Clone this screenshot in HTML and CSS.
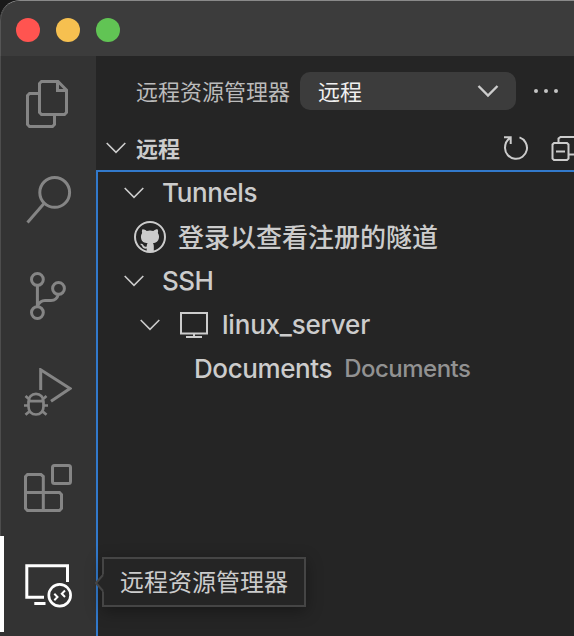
FILE: index.html
```html
<!DOCTYPE html>
<html lang="zh-CN">
<head>
<meta charset="utf-8">
<title>远程资源管理器</title>
<link rel="stylesheet" href="styles.css">
</head>
<body>
<div class="window">
  <header class="titlebar">
    <span class="light red"></span><span class="light yellow"></span><span class="light green"></span>
  </header>
  <div class="main">
    <nav class="activity">
      <div class="item"><svg viewBox="0 0 48 48"><path d="M14 13.5H5.5l-2 2v29l2 2h23l2-2V36M17.500 1.500H34L42.500 10V32.500l-2 2h-23l-2-2v-29zM33.500 1.500V10.500H42.500"/></svg></div>
      <div class="item"><svg viewBox="0 0 48 48"><circle cx="30.700" cy="16.400" r="14.900"/><path d="M20 27.500L3.500 46.500"/></svg></div>
      <div class="item"><svg viewBox="0 0 48 48"><circle cx="13.400" cy="7.400" r="5.900"/><circle cx="34.500" cy="16.400" r="5.900"/><circle cx="13.400" cy="40.600" r="5.900"/><path d="M13.400 13.500V34.500C15 30.500 17 28.500 21 28.500H27C31 28.500 33.500 26 34.500 22"/></svg></div>
      <div class="item"><svg viewBox="0 0 48 48"><path d="M16.700 22V1.800L46 20.500L27 33.300"/><path d="M12 25.800c-4.500 0-7.500 3.500-7.500 8v4.700c0 5 3 8 7.500 8s7.500-3 7.500-8v-4.700c0-4.500-3-8-7.500-8zM5 33.200H19M0 37.500H4.500M19.500 37.500H24M1.500 28L6 32M22.500 28L18 32M1.500 46.800L6.500 42.500M22.500 46.800L17.500 42.500" stroke-width="2.700"/></svg></div>
      <div class="item"><svg viewBox="0 0 48 48"><path d="M3.500 10.500H17l2.300 2V28.500H35.500l2 2V44.500l-2 2H3.500l-2-2V12.500zM1.500 28.500H19.300V46.500"/><rect x="28.500" y="1.500" width="18" height="18" rx="2"/></svg></div>
      <div class="item active"><svg viewBox="0 0 48 48"><path d="M20 37.300H2.800V5.800H43.500V22M10.300 43.500H21.500"/><circle cx="35.700" cy="35.300" r="10.900" stroke-width="2.700"/><path d="M30.300 33.700L33.500 37L30.300 40.300M41 30.500L37.800 33.700L41 37" stroke-width="2"/></svg></div>
    </nav>
    <main class="side">
      <div class="heading">
        <span class="name">远程资源管理器</span>
        <div class="select"><span>远程</span><svg width="22" height="14" viewBox="0 0 22 14"><path d="M1.500 2L11 11.500L20.500 2"/></svg></div>
        <div class="dots"><i></i><i></i><i></i></div>
      </div>
      <div class="section">
        <svg class="chev" viewBox="0 0 20 12"><path d="M.7 1L10 10.300L19.300 1"/></svg>
        <span class="title">远程</span>
        <svg class="refresh" viewBox="0 0 26 26"><path d="M1 2.300H7.700V9M7.200 2.800C3.800 5 2 8.500 2 13A11 11 0 1 0 16.500 2.400"/></svg>
        <svg class="collapse" viewBox="0 0 28 26"><path d="M7.500 8V3.500l2-1.500H28M18 19.500H28M3 8H16l1.500 1.500V23.500L16 25H3l-1.500-1.500V9.500zM5 16.500H14"/></svg>
      </div>
      <div class="tree">
        <div class="row group"><svg class="chev" viewBox="0 0 20 12"><path d="M.7 1L10 10.300L19.300 1"/></svg><span class="tunnels">Tunnels</span></div>
        <div class="row login"><svg class="github" viewBox="0 0 32 32"><circle cx="16" cy="16" r="15"/><path class="cat" d="M8.300 8.400C9.500 8 11.500 9 12.700 9.900C15 9.200 17 9.200 19.300 9.900C21 8.800 22.500 8.100 23.700 8.400C24.200 9.900 24.200 11 23.800 12.100C25 13.700 25.200 15.500 24.900 17.300C24.300 20.600 22.200 21.700 18.900 22.300C19.600 23.200 19.800 24 19.800 25V31H12.700V27.500C9 28.300 8.500 25.800 7.500 24.300L6.100 23.100C8.200 22.300 9 23.600 9.800 24.700C10.700 25.900 11.700 25.900 12.700 25.500C12.800 24 13 23 13.700 22.300C10.200 21.900 7.600 20.700 7.100 17.300C6.800 15.500 7 13.700 8.200 12.100C7.800 11 7.800 9.900 8.300 8.400Z"/></svg><span class="cjk">登录以查看注册的隧道</span></div>
        <div class="row group"><svg class="chev" viewBox="0 0 20 12"><path d="M.7 1L10 10.300L19.300 1"/></svg><span class="ssh">SSH</span></div>
        <div class="row host"><svg class="chev" viewBox="0 0 20 12"><path d="M.7 1L10 10.300L19.300 1"/></svg><svg class="monitor" viewBox="0 0 28 26"><path d="M1 1H27V21.500H1zM14 21.500V25M6 25H22"/></svg><span class="server">linux_server</span></div>
        <div class="row folder"><span class="doc">Documents</span><span class="path">Documents</span></div>
      </div>
    </main>
  </div>
  <div class="tooltip">远程资源管理器<svg viewBox="0 0 9 18"><path class="fill" d="M9 0V18L1 9z"/><path d="M8 1L1 9L8 17"/></svg></div>
</div>
</body>
</html>
```
FILE: styles.css
```css
* { box-sizing: border-box; }
body { margin: 0; background: #191919; overflow: hidden; font-family: Inter, "Noto Sans CJK SC", sans-serif; }
svg { display: block; flex: none; fill: none; stroke: currentColor; }
.window { position: relative; height: 636px; border-top: 1px solid #8a8a8a; border-radius: 20px 0 0 0; overflow: hidden; display: flex; flex-direction: column; background: #252525; }
.titlebar { height: 55px; flex: none; background: #3c3c3c; border-left: 1px solid #555; border-radius: 20px 0 0 0; display: flex; align-items: center; gap: 16px; padding: 3px 0 0 15px; }
.light { width: 24px; height: 24px; border-radius: 50%; }
.red { background: #ff5450; }
.yellow { background: #f6c050; }
.green { background: #61c454; }
.main { flex: 1; display: flex; min-height: 0; }
.activity { width: 96px; flex: none; background: #333; color: #858585; }
.item { height: 96px; padding: 24px 0 0 23px; border-left: 1px solid #4d4d4d; }
.item svg { width: 48px; height: 48px; stroke-width: 3; }
.active { color: #fff; border-left: 4px solid #fff; padding-left: 20px; }
.side { flex: 1; min-width: 0; color: #ccc; display: flex; flex-direction: column; }
.heading { height: 70px; display: flex; align-items: center; padding-left: 40px; font-size: 22px; color: #bbb; }
.name { width: 164px; flex: none; white-space: nowrap; padding-bottom: 3px; }
.select { width: 216px; height: 38px; flex: none; border-radius: 10px; background: #3c3c3c; color: #f0f0f0; display: flex; align-items: center; justify-content: space-between; padding: 0 17px 0 18px; }
.select span { padding-bottom: 3px; }
.select svg { color: #ccc; stroke-width: 2.400; }
.dots { display: flex; gap: 6px; margin-left: 18px; }
.dots i { width: 4px; height: 4px; border-radius: 50%; background: #c5c5c5; }
.section { height: 44px; display: flex; align-items: center; padding-left: 10px; }
.chev { width: 20px; height: 12px; stroke-width: 1.600; }
.title { font-size: 22px; font-weight: 700; width: 367px; flex: none; margin-left: 10px; padding-bottom: 3px; }
.refresh { width: 26px; height: 26px; stroke-width: 2; }
.collapse { width: 28px; height: 26px; stroke-width: 2; margin-left: 22px; }
.tree { flex: 1; border: solid #3279cb; border-width: 2px 0 0 2px; font-size: 26px; font-weight: 450; }
.row { height: 44px; display: flex; align-items: center; white-space: nowrap; }
.row:first-child { margin-top: -1px; }
.row span { padding-bottom: 1px; }
.group { padding-left: 26px; }
.group span { margin-left: 18px; }
.tunnels { letter-spacing: -.4px; }
.ssh { letter-spacing: -.5px; }
.login { padding-left: 36px; }
.login .cjk { padding-bottom: 4px; }
.github { width: 32px; height: 32px; margin-right: 12px; stroke-width: 2; }
.cat { fill: currentColor; stroke: none; }
.host { padding-left: 42px; }
.monitor { width: 28px; height: 26px; margin: 0 14px 0 20px; stroke-width: 2; }
.server { letter-spacing: -.2px; }
.folder { padding-left: 96px; }
.doc { letter-spacing: -.4px; }
.path { font-size: 24px; letter-spacing: -.5px; color: #929292; margin-left: 12px; }
.tooltip { position: absolute; left: 102px; top: 556px; width: 204px; height: 50px; border: 2px solid #454545; background: #252525; color: #ccc; font-size: 24px; line-height: 48px; padding-left: 16px; white-space: nowrap; box-shadow: 0 4px 16px rgba(0,0,0,.36); }
.tooltip svg { position: absolute; left: -9px; top: 15px; width: 9px; height: 18px; stroke: #454545; stroke-width: 2; }
.tooltip .fill { fill: #252525; stroke: none; }
```
